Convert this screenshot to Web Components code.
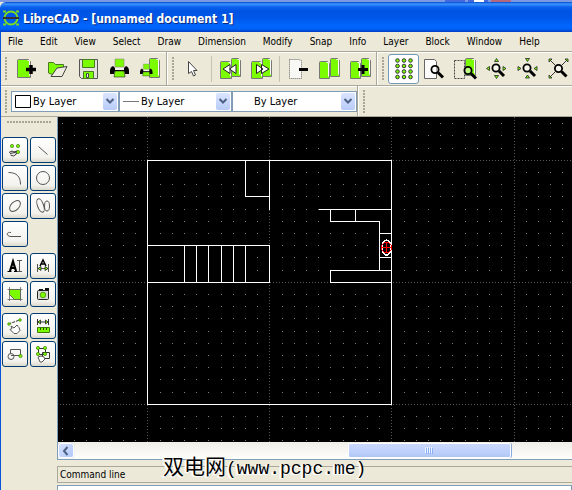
<!DOCTYPE html>
<html lang="en">
<head>
<meta charset="utf-8">
<title>LibreCAD</title>
<style>
html, body { height: 100%; margin: 0; }
body { font: 10px/14px "DejaVu Sans Condensed", "DejaVu Sans", sans-serif; color: #000; background: #ece9d8; overflow: hidden; }
</style>
</head>
<body>
<cad-window></cad-window>
<script>
const G = '#7cfc00';
const svg = (w, h, body) => `<svg width="${w}" height="${h}" viewBox="0 0 ${w} ${h}" fill="none" stroke="#333" aria-hidden="true">${body}</svg>`;
const page = (x, y, w = 10, h = 17) => `<path d="M${x} ${y + 1}q0-1 1-1h${w - 3}l2 2v${h - 2}h-${w}z" fill="${G}" stroke="#777"/><path d="M${x + w - 3} ${y + 1}h2v${h - 3}" stroke="#fff"/>`;
const lens = (x, y) => `<path d="M${x + 3} ${y + 3}l5 5" stroke="#000" stroke-width="3"/><circle cx="${x}" cy="${y}" r="3.6" stroke="#000" stroke-width="1.8" fill="#fff" fill-opacity=".5"/>`;
const printer = (s, x, y) => `<g transform="translate(${x} ${y}) scale(${s})"><path d="M5 0h9v8H5z" fill="${G}" stroke="#8b8b80" stroke-width=".6"/><path d="M3 7q-3 1-3 5v3h4l1-3h9l1 3h4v-3q0-4-3-5l-2 2H5z" fill="#000" stroke="none"/><path d="M5 9h9v2H5z" fill="#f4f4ec" stroke="none"/><path d="M5 12h9l1 6H4z" fill="${G}" stroke="#222" stroke-width=".6"/></g>`;
const tri = (d) => `<path d="${d}z" fill="${G}" stroke="#222" stroke-width=".8"/>`;
const dot = (x, y, r = 1.6) => `<circle cx="${x}" cy="${y}" r="${r}" fill="${G}" stroke="#3c7a00" stroke-width=".7"/>`;
const hand = (x, y) => `<path d="M${x} ${y}l3-2 2 1 3-1 2 1 0 4-3 3h-3l-1-3-3 0z" fill="#fff" stroke="#444"/>`;

const ICONS = {
  'new': svg(24, 24, page(2.5, 2.5, 13, 18) + '<path d="M11 12.500h10M16 8v9" stroke="#000" stroke-width="3.500"/>'),
  open: svg(24, 24, `<path d="M2.500 16V5.500h5l2 2h8v4h-6l-5 6z" fill="${G}" stroke="#4b7b20"/><path d="M5 19.500l6-8.500 10-1.500-5 10z" fill="#efecdf" stroke="#444"/>`),
  save: svg(24, 24, `<path d="M2.500 2.500h18v19h-16l-2-2z" fill="#e5e4da" stroke="#555"/><path d="M5.500 2.500h12v8h-12z" fill="${G}" stroke="#487b25"/><path d="M6.500 14.500h10v7h-10z" fill="${G}" stroke="#487b25"/><path d="M9.500 16.500h2v4h-2z" fill="#eee" stroke="#444"/>`),
  print: svg(24, 24, printer(1, 2, 2)),
  preview: svg(24, 24, page(10.5, 1.500, 10, 19) + printer(.66, 1, 7)),
  pointer: svg(24, 24, '<path d="M6.500 4.500v12l3-2 2 4.500 2-1-2-4.500h3.500z" fill="#fff" stroke="#444"/>'),
  undo: svg(24, 24, page(1.5, 4.5, 11, 17) + page(12.5, 1.500, 9, 18) + '<path d="M11 7.500v9l-7-4.500zM17 7.500v9l-6.500-4.500z" fill="#fff" stroke="#222"/>'),
  redo: svg(24, 24, page(1.5, 4.5, 11, 17) + page(12.5, 1.500, 9, 18) + '<path d="M6.500 7.500v9l6.500-4.500zM11.500 7.500v9l7.500-4.500z" fill="#fff" stroke="#222"/>'),
  cut: svg(24, 24, '<path d="M2.500 2.500h9l3 1v18h-12z" fill="#f8f8f5" stroke="#666" stroke-dasharray="1 1"/><path d="M12 12.500h9" stroke="#000" stroke-width="3"/>'),
  copy: svg(24, 24, page(1.5, 4.5, 10, 17) + page(12.5, 1.500, 9, 18)),
  paste: svg(24, 24, page(1.5, 4.5, 10, 17) + page(12.5, 1.500, 9, 18) + '<path d="M9 12.500h10M14 8v9" stroke="#000" stroke-width="3"/>'),
  grid: svg(24, 24, [5.5, 12, 18.5].map(x => [3.5, 9, 14.5, 20].map(y => `<circle cx="${x}" cy="${y}" r="1.800" fill="${G}" stroke="#333" stroke-width="1"/>`).join('')).join('')),
  redraw: svg(24, 24, '<path d="M1.500 2.500h10l2 2v17h-12z" fill="#fcfcfa" stroke="#666"/>' + lens(12, 12.5)),
  zoomwin: svg(24, 24, page(11.5, 1.500, 10, 17) + '<path d="M.5 3.500h10v18h-10z" stroke="#444" stroke-dasharray="2 1"/>' + lens(14, 13.5)),
  zoomin: svg(24, 24, lens(11, 11) + tri('M9.500 4.500l2-3 2 3') + tri('M9.500 18.500l2 3 2-3') + tri('M4.500 9.500l-3 2 3 2') + tri('M18 9.500l3 2-3 2')),
  zoomout: svg(24, 24, lens(11, 11) + tri('M9.500 1.500l2 3 2-3') + tri('M9.500 21l2-3 2 3') + tri('M2 9.500l3 2-3 2') + tri('M21 9.500l-3 2 3 2')),
  zoomauto: svg(24, 24, '<path d="M3 3l5 5M20 3l-5 5M3 20l5-5" stroke="#333"/>' + lens(11.5, 11.5) + tri('M2 5V2h3') + tri('M18 2h3v3') + tri('M2 18v3h3')),
  points: svg(20, 20, dot(7, 6) + dot(13, 6) + dot(13, 12) + '<path d="M4 12.500l3-1.500 2 1 3-1M5 13.500l5-1 2 1M5.500 15l3 1 3-2" stroke="#333"/>'),
  line: svg(20, 20, '<path d="M5.500 6.500l9 8" stroke="#555"/>'),
  arc: svg(20, 20, '<path d="M3.500 4.500c8 0 12 4 12 12" stroke="#555"/>'),
  circle: svg(20, 20, '<circle cx="10" cy="10" r="6.500" stroke="#555"/>'),
  ellipse: svg(20, 20, '<ellipse cx="10" cy="10" rx="6.500" ry="4" transform="rotate(-45 10 10)" stroke="#555"/>'),
  spline: svg(20, 20, '<ellipse cx="7.500" cy="9.500" rx="3" ry="7" transform="rotate(-20 7.500 9.500)" stroke="#555"/><ellipse cx="14" cy="10" rx="2.500" ry="5" stroke="#555"/>'),
  polyline: svg(20, 20, '<path d="M6 8.500c-5-1-5 4 0 4h10" stroke="#555"/>'),
  text: svg(20, 20, '<path d="M5 15L8 5.500 11 15M5.500 12h5" stroke="#000" stroke-width="2.200"/><path d="M2.500 15.500h4M9 15.500h4" stroke="#000"/><path d="M12 4.500h5M14.500 4.500v11M12 15.500h5" stroke="#555"/>'),
  dimension: svg(20, 20, '<path d="M7 10l3-6 3 6M8 8h4" stroke="#000" stroke-width="1.500"/><path d="M4.500 8v8M15.500 8v8M5 12.500h10" stroke="#555"/>' + tri('M8 10.500l-3 2 3 2') + tri('M12 10.500l3 2-3 2')),
  hatch: svg(20, 20, `<path d="M4.500 5.500h11v10h-6l-5-5z" fill="${G}" stroke="#438000"/><path d="M4.500 3v14M15.500 3v14M2.500 5.500h15M2.500 15.500h15M4 10l6 6" stroke="#666" stroke-width=".8"/>`),
  image: svg(20, 20, '<rect x="4.500" y="6.500" width="11" height="9" rx="1" fill="#d8d8d2" stroke="#222"/><path d="M6 5h4v2H6zM12 4h4v3h-4z" fill="#111" stroke="none"/>' + dot(10, 11, 2.8)),
  edit: svg(20, 20, '<path d="M3.500 8l11-4" stroke="#333" stroke-dasharray="3 1"/>' + dot(4, 8, 1.3) + dot(15, 4, 1.3) + '<path d="M6 10l3 2 3-3 1 1.500 1 1 1 3-3 3H9l-4-4 2-1z" fill="#fff" stroke="#555"/>'),
  measure: svg(20, 20, `<path d="M4.500 3v6M15.500 3v6M5 6h10" stroke="#333"/>${tri('M7.500 4l-2.500 2 2.500 2')}${tri('M12.500 4l2.500 2-2.500 2')}<path d="M4.500 11.500h12v5h-12z" fill="${G}" stroke="#3e7c08"/><path d="M7.500 12v2M10.500 12v2M13.500 12v2" stroke="#264d00"/>`),
  block: svg(20, 20, '<path d="M5.500 10V5.500h10v6M6 11.500h9" stroke="#555"/><circle cx="6" cy="12.500" r="3" stroke="#555"/>' + dot(15.5, 12)),
  select: svg(20, 20, '<path d="M5.500 4.500h7v6h-7zM9.500 8.500h7v6h-7z" stroke="#333"/>' + dot(5, 4) + dot(12, 4) + dot(5, 10) + dot(12, 10) + '<path d="M5 13l3-1 3 1 1 2-3 3H7z" fill="#fff" stroke="#555"/>'),
};

const define = (name, html, setup) => {
  const tpl = document.createElement('template');
  tpl.innerHTML = html;
  customElements.define(name, class extends HTMLElement {
    connectedCallback() {
      if (this.shadowRoot) return;
      this.attachShadow({ mode: 'open' }).append(tpl.content.cloneNode(true));
      if (setup) setup(this, this.shadowRoot);
    }
  });
};

define('title-bar', `
<style>
:host { display: block; }
.behind { display: flex; justify-content: flex-end; gap: 3px; height: 2px; padding-right: 61px; background: #7b98e3; }
.behind i { width: 20px; background: #4468dd; }
.behind i:nth-child(2) { background: linear-gradient(90deg, #4468dd 6px, #fff 6px 16px, #4468dd 16px); }
.behind i:nth-child(3) { background: #b5677c; }
header { display: flex; align-items: center; gap: 4px; height: 30px; padding-left: 3px; border-radius: 6px 0 0 0;
  background: linear-gradient(#0048d0 0, #3d95ff 2px, #0a62ee 5px, #0054e3 9px, #0057e8 16px, #0066ff 24px, #0062f5 27px, #003cc4 30px); }
h1 { margin: 0; padding-top: 4px; font: bold 12px/20px "DejaVu Sans Condensed", "DejaVu Sans", sans-serif; color: #fff; text-shadow: 1px 1px #0a2a80; white-space: nowrap; }
svg { flex: none; padding-top: 2px; }
</style>
<div class="behind"><i></i><i></i><i></i></div>
<header>${svg(16, 18, '<circle cx="8" cy="9" r="6.500" stroke="#7cdc20" stroke-width="2"/><path d="M0 2.500h3M13 2.500h3M0 15.500h3M13 15.500h3" stroke="#7cdc20" stroke-width="2"/><path d="M0 9h16" stroke="#333" stroke-width="2"/>')}<h1><slot></slot></h1></header>`);

define('menu-bar', `
<style>
:host { display: flex; height: 19px; }
</style><slot></slot>`);

define('menu-item', `
<style>
:host { display: block; }
button { height: 19px; padding: 1px 10px 0 7px; border: 0; background: none; font: inherit; color: inherit; }
button:hover { background: #316ac5; color: #fff; }
</style><button type="button"><slot></slot></button>`);

define('tool-bar', `
<style>
:host { display: flex; align-items: center; flex: none; border-right: 1px solid #aca899; box-shadow: 1px 0 #fff; margin-right: 1px; }
:host([last]) { border: 0; box-shadow: none; }
.grip { flex: none; width: 2px; height: 23px; margin: 0 4px; background: repeating-linear-gradient(#a9a696 0 2px, transparent 2px 3px); }
</style><span class="grip"></span><slot></slot>`);

define('tool-separator', `
<style>
:host { flex: none; width: 1px; height: 26px; margin: 0 3px 0 2px; background: #c5c2b2; }
</style>`);

define('tool-button', `
<style>
:host { display: block; flex: none; }
button { display: grid; place-items: center; width: 31px; height: 30px; padding: 0; border: 1px solid transparent; border-radius: 3px; background: none; }
button[aria-pressed=true] { background: #fff; border: 1px solid #7398b8; }
:host([boxed]) button { width: 26px; height: 26px; border: 1px solid #003c74; border-radius: 3px; background: linear-gradient(#fff, #f3f2ed 80%, #dcd8cc); }
svg { display: block; }
</style><button type="button"></button>`, (host, root) => {
  const b = root.querySelector('button');
  b.innerHTML = ICONS[host.getAttribute('icon')];
  b.setAttribute('aria-label', host.getAttribute('label'));
  if (host.hasAttribute('pressed')) b.setAttribute('aria-pressed', 'true');
});

define('pen-select', `
<style>
:host { display: grid; flex: none; align-items: center; height: 21px; box-sizing: border-box; border: 1px solid #7f9db9; background: #fff; }
select, .face { grid-area: 1 / 1; }
select { appearance: none; width: 100%; height: 19px; padding: 0 18px 0 21px; border: 0; border-radius: 0; background: none; font: 11px/19px "DejaVu Sans Condensed", "DejaVu Sans", sans-serif; color: #000; }
.face { display: flex; align-items: center; justify-content: space-between; padding: 0 1px 0 3px; pointer-events: none; }
svg { display: block; }
.arrow { display: grid; place-items: center; width: 14px; height: 17px; border-radius: 2px; background: linear-gradient(#dbe5ff, #b8cbf8); }
</style>
<span class="face"><span class="swatch"></span><span class="arrow">${svg(10, 8, '<path d="M1.500 2l3.500 3.500L8.500 2" stroke="#4d6185" stroke-width="2"/>')}</span></span>
<select><option>By Layer</option><option>By Block</option></select>`, (host, root) => {
  const marks = {
    color: svg(16, 13, '<path d="M.5.5h15v12H.5z" stroke="#000"/>'),
    width: svg(16, 13, '<path d="M0 6.500h16" stroke="#777"/>'),
  };
  root.querySelector('.swatch').innerHTML = marks[host.getAttribute('mark')] || '';
  root.querySelector('select').setAttribute('aria-label', host.getAttribute('label'));
});

define('tool-box', `
<style>
:host { display: flex; flex-direction: column; gap: 6px; padding: 4px 1px; }
.grip { height: 2px; margin: 0 5px 8px; background: repeating-linear-gradient(90deg, #a9a696 0 2px, transparent 2px 3px); }
</style><div class="grip"></div><slot></slot>`);

define('tool-group', `
<style>
:host { display: grid; grid-template-columns: repeat(2, 26px); gap: 2px; }
</style><slot></slot>`);

define('drawing-view', `
<style>
:host { display: block; min-height: 0; background: #000; overflow: hidden; }
svg { display: block; width: 100%; height: 100%; }
</style>
<svg role="img" aria-label="Floor plan" fill="none" shape-rendering="crispEdges">
<g transform="translate(89 43)">
<path class="dots" fill="#808080"/><path class="meta" fill="#585858"/>
<path stroke="#fff" transform="translate(.5 .5)" d="M0 0H244V244H0ZM98 0V36H122M122 0V49M0 85H122V122H0M37 85V122M49 85V122M61 85V122M74 85V122M86 85V122M98 85V122M171 49H244M183 49V61H232V110M208 49V61M232 73H244M232 97H244M244 110H183V122H244"/>
<ellipse cx="239.500" cy="87.500" rx="4.500" ry="7.500" stroke="#fff" stroke-width="1.500"/>
<path d="M237.500 82.500h4l3 3v4l-3 3h-4l-3-3v-4zM239.500 82v11M234 87.500h11" stroke="#f00"/>
</g></svg>`, (host, root) => {
  const px = (x, y) => `M${x} ${y}h1v1h-1z`;
  const step = 12.2;
  let dots = '', meta = '';
  for (let i = -8; i < 160; i++) for (let j = -4; j < 90; j++)
    if (i % 10 && j % 10) dots += px(Math.ceil(i * step), Math.floor(j * step + .3));
  for (let k = 0; k < 16; k++) {
    for (let t = -90; t < 1900; t += 3) meta += px(t, k * 122);
    for (let t = -43; t < 1100; t += 3) meta += px(k * 122 + (k > 2 ? 1 : 0), t);
  }
  root.querySelector('.dots').setAttribute('d', dots);
  root.querySelector('.meta').setAttribute('d', meta);
});

define('scroll-bar', `
<style>
:host { display: grid; grid-template-columns: 16px 273fr 163fr 61fr; align-items: center; height: 17px; background: linear-gradient(#f0eee8, #fefefb); border-bottom: 1px solid #7f9db9; }
button { display: grid; place-items: center; height: 15px; padding: 0; border: 1px solid #fff; border-radius: 3px; background: linear-gradient(135deg, #d5e0fe, #b3c8f8); box-shadow: 0 0 1px #8ba6d8; }
.thumb { grid-column: 3; display: grid; place-items: center; height: 13px; border: 1px solid #fff; border-radius: 2px; background: linear-gradient(#cad8fd, #bccffb 70%, #b0c5f5); box-shadow: 1px 0 #8ba9dd; }
</style>
<button type="button" aria-label="Scroll left">${svg(10, 10, '<path d="M6.500 1L3 5l3.500 4" stroke="#4d6185" stroke-width="2"/>')}</button>
<div class="thumb">${svg(8, 7, '<path d="M.5 0v6M2.500 0v6M4.500 0v6M6.500 0v6" stroke="#eef4fe"/><path d="M1.500 1v6M3.500 1v6M5.500 1v6M7.500 1v6" stroke="#8cb0f8"/>')}</div>`);

define('command-dock', `
<style>
:host { display: block; position: relative; padding-top: 6px; }
label { display: block; height: 15px; padding-left: 2px; border: 1px solid #aca899; border-right: 0; line-height: 15px; }
input { display: block; box-sizing: border-box; width: 100%; height: 20px; margin: 2px 0 -15px; border: 1px solid #7f9db9; background: #fff; font: inherit; }
.mark { position: absolute; left: 106px; top: -7px; font: 18px/24px "Liberation Mono", "Noto Sans CJK SC", monospace; white-space: nowrap; text-shadow: -1px 0 #fff, -1px 1px #fff, -2px 1px #fff, 0 1px #fff; pointer-events: none; }
.mark span { font: 400 21px/24px "Noto Sans CJK SC", sans-serif; }
</style>
<label for="cmd">Command line</label><input id="cmd" type="text">
<div class="mark"><span>双电网</span>(www.pcpc.me)</div>`);

define('cad-window', `
<style>
:host { display: flex; flex-direction: column; height: 100%; overflow: hidden; background: #ece9d8; }
.frame { flex: 1; min-height: 0; display: flex; flex-direction: column; border-left: 1px solid #0855dd; }
.row { display: flex; flex: none; border-top: 1px solid #aca899; box-shadow: inset 0 1px #fff; }
.tools { height: 33px; }
.pens { height: 30px; }
.work { flex: 1; min-height: 0; display: grid; grid-template-columns: 56px 1fr; border-top: 1px solid #aca899; }
.right { display: flex; flex-direction: column; min-width: 0; min-height: 0; }
.view { flex: 1; min-height: 0; display: flex; flex-direction: column; border-left: 1px solid #7f9db9; }
drawing-view { flex: 1; }
.c1 { width: 108px; } .c2 { width: 113px; } .c3 { width: 125px; }
.p { margin-right: 1px; }
</style>
<title-bar>LibreCAD - [unnamed document 1]</title-bar>
<div class="frame">
<menu-bar role="menubar"><menu-item>File</menu-item><menu-item>Edit</menu-item><menu-item>View</menu-item><menu-item>Select</menu-item><menu-item>Draw</menu-item><menu-item>Dimension</menu-item><menu-item>Modify</menu-item><menu-item>Snap</menu-item><menu-item>Info</menu-item><menu-item>Layer</menu-item><menu-item>Block</menu-item><menu-item>Window</menu-item><menu-item>Help</menu-item></menu-bar>
<div class="row tools">
<tool-bar><tool-button icon="new" label="New"></tool-button><tool-button icon="open" label="Open"></tool-button><tool-button icon="save" label="Save"></tool-button><tool-button icon="print" label="Print"></tool-button><tool-button icon="preview" label="Print preview"></tool-button></tool-bar>
<tool-bar><tool-button icon="pointer" label="Pointer"></tool-button><tool-separator></tool-separator><tool-button icon="undo" label="Undo"></tool-button><tool-button icon="redo" label="Redo"></tool-button><tool-separator></tool-separator><tool-button icon="cut" label="Cut"></tool-button><tool-button icon="copy" label="Copy"></tool-button><tool-button icon="paste" label="Paste"></tool-button></tool-bar>
<tool-bar last><tool-button icon="grid" label="Grid" pressed></tool-button><tool-button icon="redraw" label="Redraw"></tool-button><tool-button icon="zoomwin" label="Window zoom"></tool-button><tool-button icon="zoomin" label="Zoom in"></tool-button><tool-button icon="zoomout" label="Zoom out"></tool-button><tool-button icon="zoomauto" label="Auto zoom"></tool-button></tool-bar>
</div>
<div class="row pens">
<tool-bar class="p"><pen-select class="c1" mark="color" label="Color"></pen-select><pen-select class="c2" mark="width" label="Width"></pen-select><pen-select class="c3" label="Line type"></pen-select></tool-bar>
<tool-bar last></tool-bar>
</div>
<div class="work">
<tool-box>
<tool-group><tool-button boxed icon="points" label="Points"></tool-button><tool-button boxed icon="line" label="Lines"></tool-button><tool-button boxed icon="arc" label="Arcs"></tool-button><tool-button boxed icon="circle" label="Circles"></tool-button><tool-button boxed icon="ellipse" label="Ellipses"></tool-button><tool-button boxed icon="spline" label="Splines"></tool-button><tool-button boxed icon="polyline" label="Polylines"></tool-button></tool-group>
<tool-group><tool-button boxed icon="text" label="Text"></tool-button><tool-button boxed icon="dimension" label="Dimensions"></tool-button><tool-button boxed icon="hatch" label="Hatch"></tool-button><tool-button boxed icon="image" label="Image"></tool-button></tool-group>
<tool-group><tool-button boxed icon="edit" label="Modify"></tool-button><tool-button boxed icon="measure" label="Measure"></tool-button><tool-button boxed icon="block" label="Block"></tool-button><tool-button boxed icon="select" label="Select"></tool-button></tool-group>
</tool-box>
<div class="right"><div class="view"><drawing-view></drawing-view><scroll-bar></scroll-bar></div><command-dock></command-dock></div>
</div>
</div>`);
</script>
</body>
</html>
